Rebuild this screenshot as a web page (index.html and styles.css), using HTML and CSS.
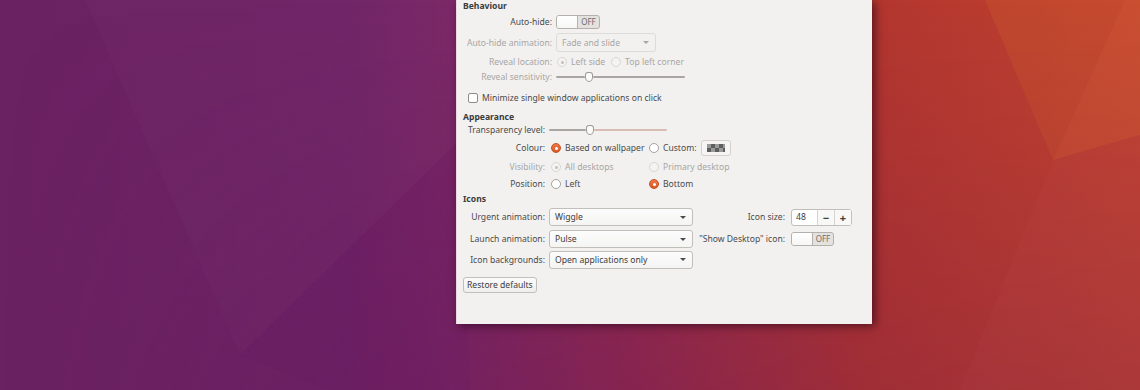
FILE: index.html
```html
<!DOCTYPE html>
<html lang="en">
<head>
  <meta charset="UTF-8" />
  <title>Unity Tweak - Launcher</title>
  <link rel="stylesheet" href="styles.css">
</head>
<body>
  <svg class="wallpaper" width="1140" height="390" viewBox="0 0 1140 390">
    <defs>
      <linearGradient id="base" x1="0" y1="0" x2="1" y2="0">
        <stop offset="0" stop-color="#6a2262" />
        <stop offset="0.3" stop-color="#6e2366" />
        <stop offset="0.4" stop-color="#7a2665" />
        <stop offset="0.55" stop-color="#932a50" />
        <stop offset="0.76" stop-color="#b3362f" />
        <stop offset="1" stop-color="#c2432f" />
      </linearGradient>
      <linearGradient id="shade" x1="0" y1="0" x2="0" y2="1">
        <stop offset="0" stop-color="#5a1050" stop-opacity="0" />
        <stop offset="1" stop-color="#5a1050" stop-opacity="0.22" />
      </linearGradient>
      <linearGradient id="fade" x1="0" y1="0" x2="1" y2="0">
        <stop offset="0" stop-color="#ffffff" stop-opacity="0" />
        <stop offset="0.45" stop-color="#ffffff" stop-opacity="1" />
      </linearGradient>
      <mask id="rightOnly">
        <rect width="1140" height="390" fill="url(#fade)" />
      </mask>
    </defs>
    <rect width="1140" height="390" fill="url(#base)" />
    <polygon points="85,0 470,0 460,140 240,355" fill="#ffffff" opacity="0.015" />
    <polygon points="240,355 460,140 470,390 330,390" fill="#6a0f60" opacity="0.08" />
    <polygon points="985,0 1125,0 1053,160" fill="#d06030" opacity="0.28" />
    <polygon points="1125,0 1140,0 1140,135 1053,160" fill="#dc6a38" opacity="0.32" />
    <polygon points="1053,160 1140,135 1140,390 960,390" fill="#c85048" opacity="0.18" />
    <rect width="1140" height="390" fill="url(#shade)" mask="url(#rightOnly)" />
  </svg>

  <div class="dialog">
    <div class="section-title">Behaviour</div>

    <div class="row r-autohide">
      <span class="label lb-wide">Auto-hide:</span>
      <div class="switch"><span class="switch-knob"></span><span class="switch-text">OFF</span></div>
    </div>

    <div class="row r-anim">
      <span class="label lb-wide disabled">Auto-hide animation:</span>
      <div class="combo combo-disabled combo-fade"><span>Fade and slide</span><span class="arrow"></span></div>
    </div>

    <div class="row r-reveal">
      <span class="label lb-wide disabled">Reveal location:</span>
      <label class="radio-opt disabled opt-left"><span class="radio radio-off-disabled checked"></span>Left side</label>
      <label class="radio-opt disabled"><span class="radio radio-off-disabled"></span>Top left corner</label>
    </div>

    <div class="row r-sens">
      <span class="label lb-wide disabled">Reveal sensitivity:</span>
      <div class="slider slider-sens">
        <span class="track track-grey" style="width: 29px"></span>
        <span class="knob"></span>
        <span class="track track-grey"></span>
      </div>
    </div>

    <div class="row r-check">
      <label class="check-opt"><span class="checkbox"></span>Minimize single window applications on click</label>
    </div>

    <div class="section-title">Appearance</div>

    <div class="row r-trans">
      <span class="label">Transparency level:</span>
      <div class="slider slider-trans">
        <span class="track track-grey" style="width: 37px"></span>
        <span class="knob"></span>
        <span class="track track-tint"></span>
      </div>
    </div>

    <div class="grid-appear">
      <span class="label">Colour:</span>
      <label class="radio-opt"><span class="radio radio-on"></span>Based on wallpaper</label>
      <div class="radio-opt">
        <span class="radio"></span>Custom:
        <span class="colour-btn"><span class="checker"></span></span>
      </div>

      <span class="label disabled">Visibility:</span>
      <label class="radio-opt disabled"><span class="radio radio-off-disabled checked"></span>All desktops</label>
      <label class="radio-opt disabled"><span class="radio radio-off-disabled"></span>Primary desktop</label>

      <span class="label">Position:</span>
      <label class="radio-opt"><span class="radio"></span>Left</label>
      <label class="radio-opt"><span class="radio radio-on"></span>Bottom</label>
    </div>

    <div class="section-title">Icons</div>

    <div class="grid-icons">
      <span class="label">Urgent animation:</span>
      <div class="combo"><span>Wiggle</span><span class="arrow"></span></div>
      <span class="label label-right">Icon size:</span>
      <div class="spin">
        <span class="spin-value">48</span>
        <span class="spin-btn">&minus;</span>
        <span class="spin-btn">+</span>
      </div>

      <span class="label">Launch animation:</span>
      <div class="combo"><span>Pulse</span><span class="arrow"></span></div>
      <span class="label label-right">"Show Desktop" icon:</span>
      <div class="switch switch-small"><span class="switch-knob"></span><span class="switch-text">OFF</span></div>

      <span class="label">Icon backgrounds:</span>
      <div class="combo"><span>Open applications only</span><span class="arrow"></span></div>
      <span></span>
      <span></span>
    </div>

    <div class="row r-restore">
      <button class="button">Restore defaults</button>
    </div>
  </div>
</body>
</html>
```

FILE: styles.css
```css
* {
  margin: 0;
  padding: 0;
  box-sizing: border-box;
}

body {
  width: 1140px;
  height: 390px;
  overflow: hidden;
  display: grid;
  grid-template-columns: 1140px;
  grid-template-rows: 390px;
  font-family: 'Noto Sans', 'Open Sans', sans-serif;
  font-size: 8.6px;
  color: #4a4a4a;
}

.wallpaper {
  grid-area: 1 / 1;
  display: block;
}

.dialog {
  grid-area: 1 / 1;
  align-self: start;
  margin-left: 456px;
  width: 416px;
  height: 324px;
  background: #f2f1f0;
  border-left: 1px solid #e8d8e2;
  box-shadow: 3px 2px 9px rgba(30, 0, 20, 0.6);
  display: flex;
  flex-direction: column;
}

.section-title {
  height: 12px;
  line-height: 12px;
  padding-left: 6px;
  font-weight: 700;
  color: #3c3c3c;
}

.row {
  display: flex;
  align-items: center;
}

.label {
  flex: none;
  width: 92px;
  padding-right: 4px;
  text-align: right;
  white-space: nowrap;
}

.lb-wide {
  width: 99px;
}

.disabled {
  color: #a8a6a3;
}

/* row heights follow the dialog spacing */
.r-autohide { height: 19px; padding-top: 1px; }
.r-anim { height: 23px; }
.r-reveal { height: 16px; }
.r-sens { height: 14px; }
.r-check { height: 27px; padding-left: 11px; }
.r-trans { height: 14px; }
.r-restore { height: 30px; padding-left: 6px; }

/* switch */
.switch {
  display: flex;
  width: 44px;
  height: 14px;
  border: 1px solid #b4b1ac;
  border-radius: 3px;
  background: #e4e2df;
  overflow: hidden;
}

.switch-small {
  width: 43px;
}

.switch-knob {
  width: 21px;
  background: linear-gradient(#ffffff, #f6f6f5);
  border-right: 1px solid #b4b1ac;
}

.switch-text {
  flex: 1;
  text-align: center;
  font-size: 8px;
  line-height: 12px;
  color: #6a6a6a;
}

/* combo boxes */
.combo {
  display: flex;
  align-items: center;
  justify-content: space-between;
  width: 144px;
  height: 18px;
  padding: 0 6px 0 5px;
  border: 1px solid #c2bfba;
  border-radius: 3px;
  background: linear-gradient(#fcfcfc, #f4f4f3);
  color: #3c3c3c;
}

.combo-disabled {
  background: #f2f1f0;
  border-color: #dddbd7;
  color: #a8a6a3;
}

.combo-fade {
  width: 100px;
  height: 19px;
}

.arrow {
  width: 0;
  height: 0;
  border-left: 3px solid transparent;
  border-right: 3px solid transparent;
  border-top: 3px solid #4a4a4a;
}

.combo-disabled .arrow {
  border-top-color: #a8a6a3;
}

/* radios and checkbox */
.radio-opt {
  display: flex;
  align-items: center;
  gap: 3px;
  white-space: nowrap;
}

.opt-left {
  margin-left: 1px;
  margin-right: 6px;
}

.radio {
  flex: none;
  position: relative;
  width: 10px;
  height: 10px;
  border: 1px solid #a5a29d;
  border-radius: 50%;
  background: #ffffff;
  margin-right: 1px;
}

.radio-off-disabled {
  border-color: #d9d7d3;
  background: #f4f3f2;
}

.radio-off-disabled.checked::after {
  content: '';
  position: absolute;
  top: 2.5px;
  left: 2.5px;
  width: 3px;
  height: 3px;
  border-radius: 50%;
  background: #c3c1bd;
}

.radio-on {
  border-color: #c2511f;
  background: linear-gradient(#f07746, #dc5a26);
}

.radio-on::after {
  content: '';
  position: absolute;
  top: 2.5px;
  left: 2.5px;
  width: 3px;
  height: 3px;
  border-radius: 50%;
  background: #ffffff;
}

.check-opt {
  display: flex;
  align-items: center;
  gap: 4px;
}

.checkbox {
  width: 10px;
  height: 10px;
  border: 1px solid #8e8b87;
  border-radius: 2px;
  background: #ffffff;
}

/* sliders */
.slider {
  display: flex;
  align-items: center;
  height: 12px;
}

.slider-sens {
  width: 129px;
}

.slider-trans {
  width: 118px;
}

.track {
  height: 2px;
  border-radius: 1px;
}

.track:last-child {
  flex: 1;
}

.track-grey {
  background: #a9a6a1;
}

.track-tint {
  background: #d7bdb4;
}

.knob {
  flex: none;
  width: 8px;
  height: 10px;
  border: 1px solid #9d9a95;
  border-radius: 3px 3px 4px 4px / 3px 3px 5px 5px;
  background: #fbfbfa;
}

/* appearance grid */
.grid-appear {
  display: grid;
  grid-template-columns: 92px 98px auto;
  grid-template-rows: 22px 16px 18px;
  align-items: center;
}

.grid-appear .radio-opt {
  padding-left: 2px;
}

.colour-btn {
  display: flex;
  align-items: center;
  justify-content: center;
  width: 30px;
  height: 16px;
  margin-left: 1px;
  border: 1px solid #d4d1cc;
  border-radius: 3px;
  background: #f6f5f4;
}

.checker {
  width: 18px;
  height: 8px;
  background-color: #9a9a9a;
  background-image:
    linear-gradient(45deg, #5e5e5e 25%, transparent 25%, transparent 75%, #5e5e5e 75%),
    linear-gradient(45deg, #5e5e5e 25%, transparent 25%, transparent 75%, #5e5e5e 75%);
  background-size: 8px 8px;
  background-position: 0 0, 4px 4px;
}

/* icons grid */
.grid-icons {
  display: grid;
  grid-template-columns: 92px 144px 98px auto;
  grid-template-rows: 24px 20px 21px;
  align-items: center;
}

.label-right {
  width: 98px;
  padding-right: 6px;
}

.spin {
  display: flex;
  width: 61px;
  height: 17px;
  border: 1px solid #c2bfba;
  border-radius: 3px;
  background: #ffffff;
  color: #3c3c3c;
}

.spin-value {
  width: 25px;
  padding-left: 4px;
  line-height: 15px;
}

.spin-btn {
  width: 17px;
  text-align: center;
  line-height: 15px;
  font-size: 11px;
  font-weight: 700;
  border-left: 1px solid #d6d3cf;
  background: #f8f8f7;
}

.button {
  height: 16px;
  padding: 0 3px;
  border: 1px solid #c2bfba;
  border-radius: 3px;
  background: linear-gradient(#fbfbfb, #efeeed);
  font-family: inherit;
  font-size: 8.6px;
  color: #3c3c3c;
}
```
